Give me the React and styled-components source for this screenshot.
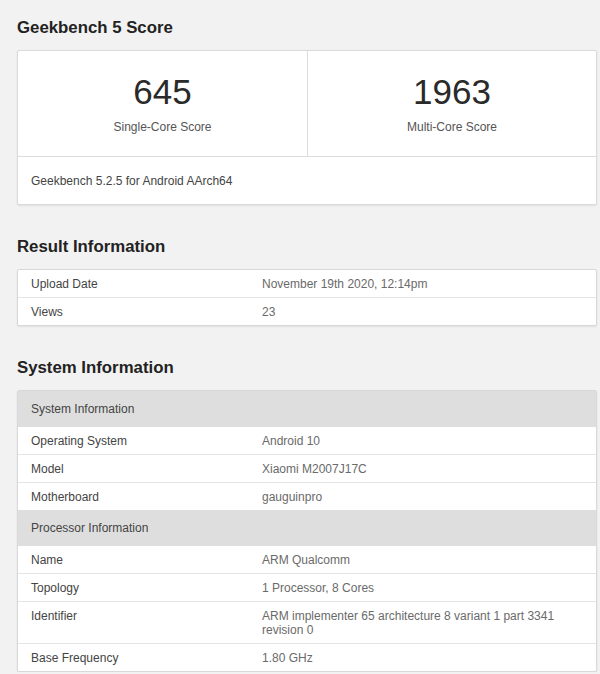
import React from "react";
import styled, { createGlobalStyle } from "styled-components";

const GlobalStyle = createGlobalStyle`
  body {
    margin: 0;
    background: #f2f2f2;
    font-family: "Liberation Sans", Arial, sans-serif;
  }
`;

const Page = styled.div`
  padding: 16px 3px 0 17px;
`;

const Heading = styled.h2`
  margin: ${props => (props.first ? "0" : "30px")} 0 10px;
  font-size: 16.8px;
  line-height: 24px;
  font-weight: bold;
  color: #222;
`;

const Card = styled.div`
  background: #fff;
  border: 1px solid #dadada;
  border-radius: 2px;
  box-shadow: 0 1px 2px rgba(0, 0, 0, 0.08);
`;

const ScoreRow = styled.div`
  display: grid;
  grid-template-columns: 1fr 1fr;
  height: 105px;
  border-bottom: 1px solid #dcdcdc;
`;

const Score = styled.div`
  display: flex;
  flex-direction: column;
  align-items: center;
  padding-top: 21px;
  & + & {
    border-left: 1px solid #dcdcdc;
  }
`;

const ScoreValue = styled.div`
  font-size: 35px;
  line-height: 40px;
  color: #2a2a2a;
`;

const ScoreLabel = styled.div`
  margin-top: 8px;
  font-size: 12px;
  color: #555;
`;

const CardFooter = styled.div`
  height: 47px;
  display: flex;
  align-items: center;
  padding-left: 13px;
  font-size: 12px;
  color: #444;
`;

const Table = styled.div`
  background: #fff;
  border: 1px solid #d8d8d8;
  border-radius: 2px;
  box-shadow: 0 1px 2px rgba(0, 0, 0, 0.08);
`;

const Row = styled.div`
  display: grid;
  grid-template-columns: 231px 1fr;
  padding: 7px 13px 6px;
  font-size: 12px;
  line-height: 14px;
  & + & {
    border-top: 1px solid #e4e4e4;
  }
`;

const Label = styled.div`
  color: #444;
`;

const Value = styled.div`
  color: #6a6a6a;
`;

const GroupHeader = styled.div`
  background: #dedede;
  height: 36px;
  display: flex;
  align-items: center;
  padding-left: 13px;
  font-size: 12px;
  color: #444;
  & + ${Row} {
    border-top: none;
  }
`;

const result = [
  ["Upload Date", "November 19th 2020, 12:14pm"],
  ["Views", "23"],
];

const system = [
  {
    title: "System Information",
    rows: [
      ["Operating System", "Android 10"],
      ["Model", "Xiaomi M2007J17C"],
      ["Motherboard", "gauguinpro"],
    ],
  },
  {
    title: "Processor Information",
    rows: [
      ["Name", "ARM Qualcomm"],
      ["Topology", "1 Processor, 8 Cores"],
      ["Identifier", "ARM implementer 65 architecture 8 variant 1 part 3341 revision 0"],
      ["Base Frequency", "1.80 GHz"],
    ],
  },
];

export default function App() {
  return (
    <Page>
      <GlobalStyle />
      <Heading first>Geekbench 5 Score</Heading>
      <Card>
        <ScoreRow>
          <Score>
            <ScoreValue>645</ScoreValue>
            <ScoreLabel>Single-Core Score</ScoreLabel>
          </Score>
          <Score>
            <ScoreValue>1963</ScoreValue>
            <ScoreLabel>Multi-Core Score</ScoreLabel>
          </Score>
        </ScoreRow>
        <CardFooter>Geekbench 5.2.5 for Android AArch64</CardFooter>
      </Card>

      <Heading>Result Information</Heading>
      <Table>
        {result.map(([k, v]) => (
          <Row key={k}>
            <Label>{k}</Label>
            <Value>{v}</Value>
          </Row>
        ))}
      </Table>

      <Heading>System Information</Heading>
      <Table>
        {system.map(group => (
          <React.Fragment key={group.title}>
            <GroupHeader>{group.title}</GroupHeader>
            {group.rows.map(([k, v]) => (
              <Row key={k}>
                <Label>{k}</Label>
                <Value>{v}</Value>
              </Row>
            ))}
          </React.Fragment>
        ))}
      </Table>
    </Page>
  );
}
